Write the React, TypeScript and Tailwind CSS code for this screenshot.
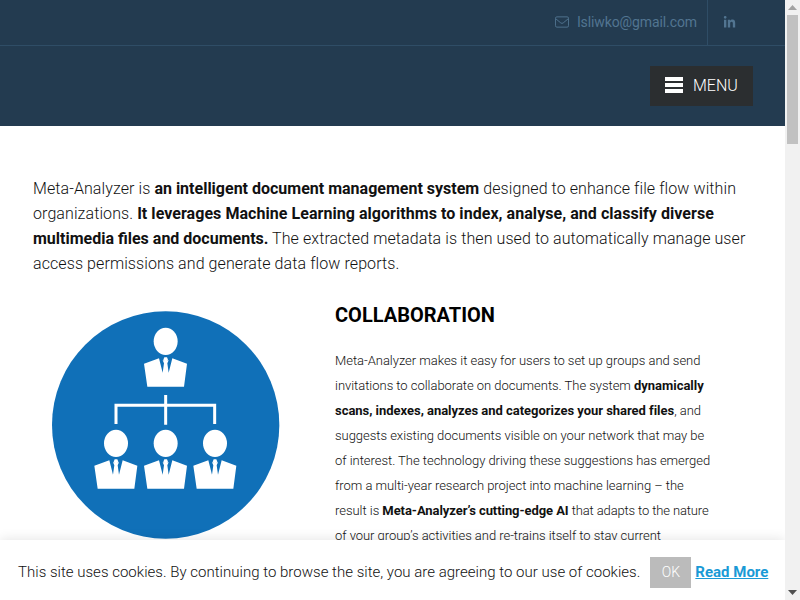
import React from "react";
import { FaLinkedinIn } from "react-icons/fa";

function Person({ dx = 0, dy = 0 }: { dx?: number; dy?: number }) {
  return (
    <g transform={`translate(${dx} ${dy})`}>
      <ellipse cx="377" cy="124" rx="36" ry="41" fill="#fff" />
      <path d="M312 191 L357 175 L368 218 L372 190 L368 181 L386 181 L382 190 L386 218 L397 175 L441 191 L432 260 L322 260 Z" fill="#fff" />
      <path d="M373 172 L381 172 L384 179 L380 183 L374 183 L370 179 Z" fill="#fff" />
    </g>
  );
}

function OrgIcon() {
  return (
    <svg viewBox="0 0 750 750" className="w-[250px] h-[250px] block" aria-hidden="true">
      <circle cx="377" cy="375" r="341" fill="#1070b8" />
      <Person />
      <Person dx={-149} dy={306} />
      <Person dy={306} />
      <Person dx={148} dy={306} />
      <path d="M228 372 V316 H524 V372 M377 285 V374" fill="none" stroke="#fff" strokeWidth="9" />
    </svg>
  );
}

export default function App() {
  return (
    <div className="flex h-screen w-full overflow-hidden bg-white font-['Roboto',sans-serif] font-light text-[#111]">
      <div className="relative flex-1 min-w-0 h-full overflow-hidden">
        <header className="bg-[#233b50] h-[126px]">
          <div className="h-[46px] border-b border-[#2f4d66] flex justify-end pr-[33px] text-[#527591]">
            <div className="flex items-center gap-2 pr-[10px] pb-[1px] font-normal text-sm tracking-[-0.1px]">
              <svg width="14" height="12" viewBox="0 0 15 12" fill="none" stroke="currentColor" strokeWidth="1" aria-hidden="true">
                <rect x="0.5" y="0.5" width="14" height="11" rx="1.5" />
                <path d="M0.8 2.5 L6.2 7 Q7.5 8 8.8 7 L14.2 2.5" />
              </svg>
              <span>lsliwko@gmail.com</span>
            </div>
            <div className="w-[45px] border-l border-[#2f4d66] flex items-center justify-center pb-[1px] pr-[1px]">
              <FaLinkedinIn size={13} />
            </div>
          </div>
          <div className="flex justify-end pr-[32px] pt-[20px]">
            <button className="w-[103px] h-[40px] bg-[#2b2e30] flex items-center pl-[15px] gap-[10px] text-white text-base">
              <span className="w-[18px] flex flex-col gap-[2px] -mt-[2px]">
                <span className="h-[4px] bg-white block" />
                <span className="h-[4px] bg-white block" />
                <span className="h-[4px] bg-white block" />
              </span>
              <span className="font-light">MENU</span>
            </button>
          </div>
        </header>

        <main className="px-[33px] pt-[50px]">
          <p className="text-base leading-[25px] w-[720px] tracking-[0.09px]">
            Meta-Analyzer is <b className="font-bold tracking-normal">an intelligent document management system</b> designed to enhance file flow within organizations. <b className="font-bold tracking-[0.05px]">It leverages Machine Learning algorithms to index, analyse, and classify diverse <span className="tracking-normal">multimedia files and documents.</span></b> The extracted metadata is then used to automatically manage user access permissions and generate data flow reports.
          </p>
          <div className="flex mt-[24px]">
            <div className="w-[302px] shrink-0 pl-[7px]">
              <OrgIcon />
            </div>
            <div className="w-[378px]">
              <h2 className="text-xl font-bold text-black leading-[28px] mt-[1px] mb-[19px]">COLLABORATION</h2>
              <p className="text-[13px] leading-[25px] tracking-[-0.03px]">
                Meta-Analyzer makes it easy for users to set up groups and send invitations to collaborate on documents. The system <b className="font-bold">dynamically scans, indexes, analyzes and categorizes your shared files</b>, and suggests existing documents visible on your network that may be of interest. The technology driving these suggestions has emerged from a multi-year research project into machine learning – the result is <b className="font-bold tracking-[-0.07px]">Meta-Analyzer’s cutting-edge AI</b> <span className="tracking-[-0.13px]">that adapts to the nature</span> of your group’s activities and re-trains itself to stay current
              </p>
            </div>
          </div>
        </main>

        <div className="absolute left-0 right-0 bottom-0 h-[60px] bg-white shadow-[0_0_12px_rgba(0,0,0,0.12)] flex items-center pl-[18px] pt-[4px] text-[15px] whitespace-nowrap tracking-[0.02px]">
          <span>This site uses cookies. By continuing to browse the site, you are agreeing to our use of cookies.</span>
          <span className="ml-[10px] w-[41px] h-[31px] bg-[#bbbbbb] text-white text-sm font-light flex items-center justify-center tracking-normal">OK</span>
          <a className="ml-[4px] font-bold text-[#1a9ad6] underline tracking-normal">Read More</a>
        </div>
      </div>

      <div className="w-[15px] h-full bg-[#f1f1f1] flex flex-col items-center shrink-0">
        <div className="h-[15px] flex items-center justify-center">
          <svg width="9" height="5" viewBox="0 0 9 5" aria-hidden="true"><path d="M4.5 0 L9 5 H0 Z" fill="#a3a3a3" /></svg>
        </div>
        <div className="w-[11px] h-[129px] bg-[#c1c1c1]" />
        <div className="flex-1" />
        <div className="h-[15px] flex items-center justify-center">
          <svg width="9" height="5" viewBox="0 0 9 5" aria-hidden="true"><path d="M0 0 H9 L4.5 5 Z" fill="#505050" /></svg>
        </div>
      </div>
    </div>
  );
}
